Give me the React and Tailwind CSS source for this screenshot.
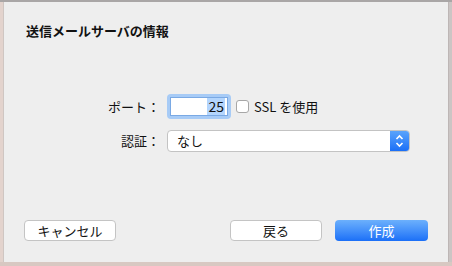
const font = { fontFamily: '"Noto Sans CJK JP", "Noto Sans", sans-serif' };

export default function App() {
  return (
    <div className="w-[452px] h-[266px] flex flex-col bg-[#dccdc7] overflow-hidden" style={font}>
      <div className="h-[2px] bg-[#a9a6a6]" />
      <div className="flex h-[260px]">
        <div className="w-[4px] bg-[#e3d3cd] border-r border-[#cfc6c2]" />
        <div className="flex-1 bg-[#eeeeee] flex flex-col text-[#111]">
          <div className="pl-[22px] pt-[21px] text-[13px] font-bold leading-[16px]">送信メールサーバの情報</div>

          <div className="mt-[55px] grid grid-cols-[156px_auto] gap-x-[7px] gap-y-[11px] items-center text-[13px]">
            <div className="text-right">ポート：</div>
            <div className="flex items-center">
              <div className="w-[64px] h-[25px] rounded-[4px] bg-[#a7cbf6] p-[3px]">
                <div className="h-full bg-white border border-[#7aa9e4] flex items-center justify-end pr-[2px]">
                  <span className="bg-[#b3d5fd] leading-[17px] px-[1px] text-[14px]">25</span>
                </div>
              </div>
              <div className="ml-[5px] w-[13px] h-[13px] rounded-[3px] border border-[#a7a7a7] bg-white" />
              <span className="ml-[5px]">SSL を使用</span>
            </div>

            <div className="text-right">認証：</div>
            <div className="w-[243px] h-[22px] rounded-[4px] border border-[#c3c3c3] bg-white flex items-stretch overflow-hidden">
              <span className="flex-1 pl-[9px] leading-[20px]">なし</span>
              <div className="w-[19px] bg-gradient-to-b from-[#5aa3fb] to-[#1a6ff7] flex items-center justify-center">
                <svg width="9" height="14" viewBox="0 0 9 14" fill="none" stroke="white" strokeWidth="1.6">
                  <path d="M1.5 5 L4.5 2 L7.5 5" />
                  <path d="M1.5 9 L4.5 12 L7.5 9" />
                </svg>
              </div>
            </div>
          </div>

          <div className="mt-auto mb-[21px] flex items-center text-[13px] px-[20px]">
            <button className="w-[92px] h-[21px] rounded-[4px] border border-[#c4c4c4] bg-white leading-[19px]">キャンセル</button>
            <button className="ml-auto w-[92px] h-[21px] rounded-[4px] border border-[#c4c4c4] bg-white leading-[19px]">戻る</button>
            <button className="ml-[13px] w-[93px] h-[21px] rounded-[4px] bg-gradient-to-b from-[#6cb0fc] to-[#1a6ff7] text-white leading-[21px]">作成</button>
          </div>
        </div>
        <div className="w-[4px] bg-[#cbc5c4] border-l border-[#bdb6b5]" />
      </div>
      <div className="flex-1 bg-[#d8c8c2]" />
    </div>
  );
}
